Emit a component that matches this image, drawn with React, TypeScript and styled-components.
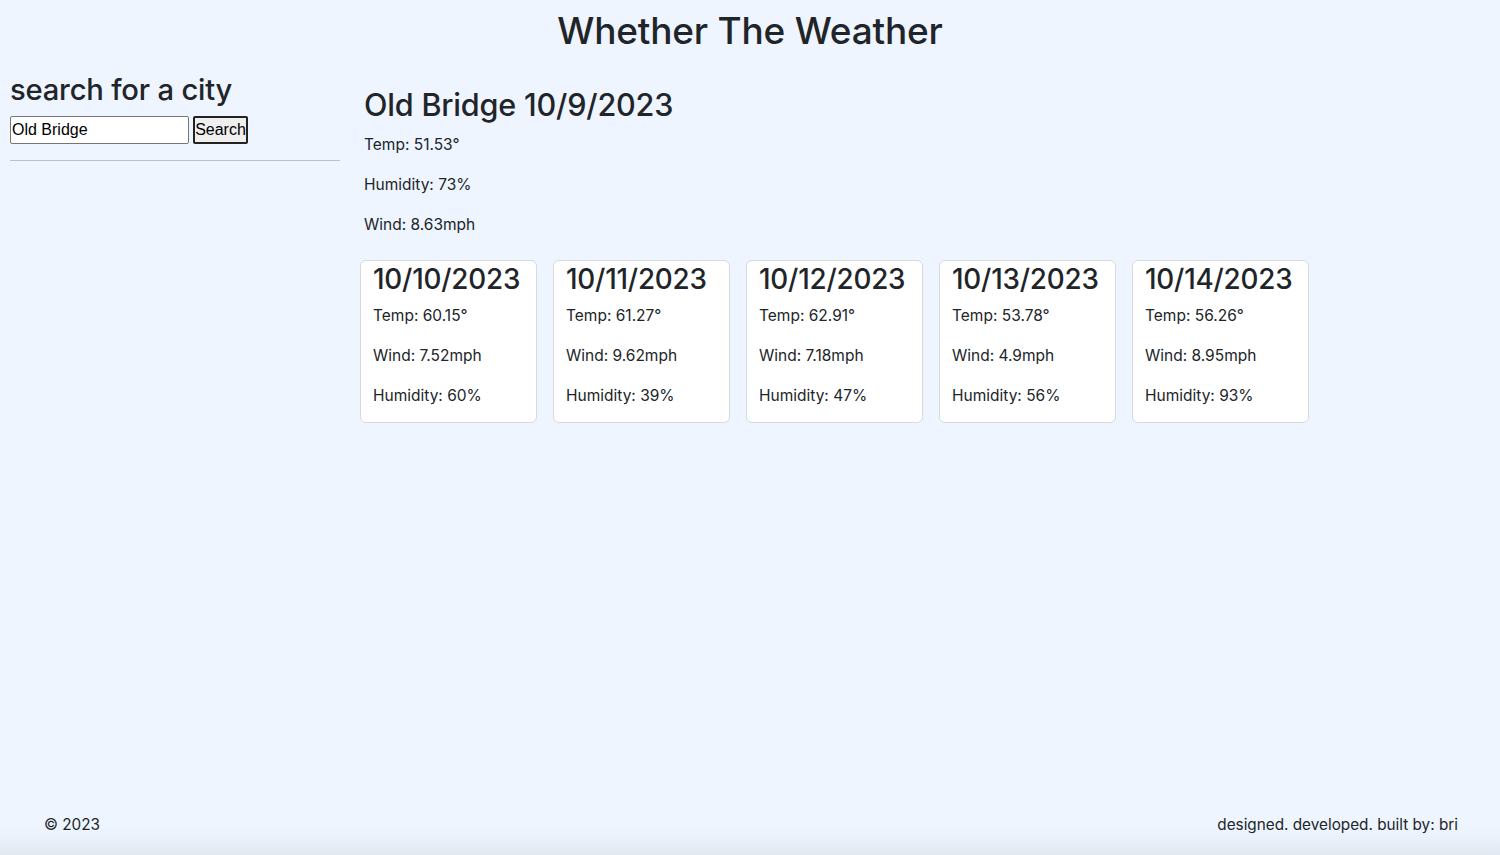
import React from "react";
import styled, { createGlobalStyle } from "styled-components";

const Global = createGlobalStyle`
  * { box-sizing: border-box; }
  html, body { margin: 0; padding: 0; }
  body {
    background: #eef5ff;
    color: #212529;
    font-family: Inter, "Noto Sans", sans-serif;
    font-size: 16px;
    line-height: 1.5;
  }
`;

const Page = styled.div`
  min-height: 100vh;
  display: flex;
  flex-direction: column;
`;

const Title = styled.h1`
  margin: 0;
  font-size: 37px;
  font-weight: 500;
  line-height: 62px;
  text-align: center;
  letter-spacing: -0.2px;
`;

const Row = styled.main`
  flex: 1;
  display: flex;
  padding: 0 10px;
`;

const Sidebar = styled.aside`
  width: 330px;
  flex: none;
  padding-top: 9px;
`;

const SideHeading = styled.h2`
  margin: 0 0 7px;
  font-size: 29.2px;
  font-weight: 500;
  line-height: 38px;
  letter-spacing: -0.2px;
`;

const SearchForm = styled.form`
  display: flex;
  gap: 4px;
  align-items: center;
`;

const Input = styled.input`
  width: 179px;
  height: 28px;
  border: 1px solid #767676;
  border-radius: 2px;
  background: #fff;
  padding: 0 1px;
  font-family: "Liberation Sans", Arial, sans-serif;
  font-size: 16px;
  color: #000;
`;

const Button = styled.button`
  height: 28px;
  width: 55px;
  padding: 0;
  border: 2px solid #222;
  border-radius: 2px;
  background: #efefef;
  font-family: "Liberation Sans", Arial, sans-serif;
  font-size: 16px;
  color: #000;
`;

const Rule = styled.hr`
  margin: 16px 0 0;
  border: 0;
  border-top: 1px solid #b9c2cc;
`;

const Content = styled.section`
  flex: 1;
  padding-left: 24px;
  padding-top: 24px;
`;

const CityHeading = styled.h2`
  margin: 0 0 9px;
  font-size: 30.6px;
  font-weight: 500;
  line-height: 38px;
  letter-spacing: -0.2px;
`;

const Stat = styled.p`
  margin: 0 0 16px;
  font-size: 15.5px;
  line-height: 24px;
`;

const Forecast = styled.div`
  display: flex;
  gap: 16px;
  margin-left: -4px;
  margin-top: 23px;
`;

const Card = styled.div`
  width: 177px;
  height: 163px;
  background: #fff;
  border: 1px solid #d6d9dd;
  border-radius: 6px;
  padding: 0 12px;
`;

const CardDate = styled.h2`
  margin: 0 0 7px;
  font-size: 27.8px;
  font-weight: 500;
  line-height: 36px;
  letter-spacing: -0.2px;
`;

const Footer = styled.footer`
  display: flex;
  justify-content: space-between;
  align-items: center;
  padding: 0 42px 0 44px;
  height: 60px;
  font-size: 15.3px;
  background: linear-gradient(to bottom, #eef5ff 0%, #eef5ff 55%, #e3e9f1 100%);
`;

const forecast = [
  { date: "10/10/2023", temp: "60.15", wind: "7.52", hum: "60" },
  { date: "10/11/2023", temp: "61.27", wind: "9.62", hum: "39" },
  { date: "10/12/2023", temp: "62.91", wind: "7.18", hum: "47" },
  { date: "10/13/2023", temp: "53.78", wind: "4.9", hum: "56" },
  { date: "10/14/2023", temp: "56.26", wind: "8.95", hum: "93" },
];

export default function App() {
  return (
    <Page>
      <Global />
      <Title>Whether The Weather</Title>
      <Row>
        <Sidebar>
          <SideHeading>search for a city</SideHeading>
          <SearchForm onSubmit={(e) => e.preventDefault()}>
            <Input defaultValue="Old Bridge" />
            <Button type="submit">Search</Button>
          </SearchForm>
          <Rule />
        </Sidebar>
        <Content>
          <CityHeading>Old Bridge 10/9/2023</CityHeading>
          <Stat>Temp: 51.53°</Stat>
          <Stat>Humidity: 73%</Stat>
          <Stat>Wind: 8.63mph</Stat>
          <Forecast>
            {forecast.map((d) => (
              <Card key={d.date}>
                <CardDate>{d.date}</CardDate>
                <Stat>Temp: {d.temp}°</Stat>
                <Stat>Wind: {d.wind}mph</Stat>
                <Stat>Humidity: {d.hum}%</Stat>
              </Card>
            ))}
          </Forecast>
        </Content>
      </Row>
      <Footer>
        <span>© 2023</span>
        <span>designed. developed. built by: bri</span>
      </Footer>
    </Page>
  );
}
